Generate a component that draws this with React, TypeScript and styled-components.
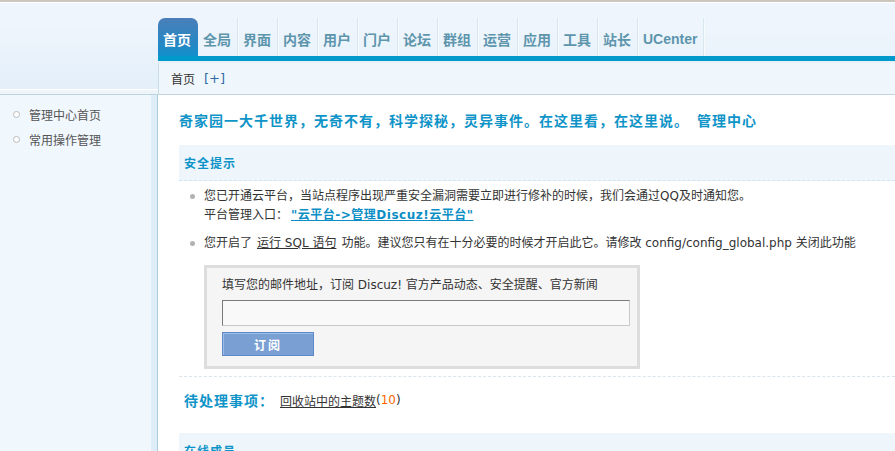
import React from "react";
import styled, { createGlobalStyle } from "styled-components";

const GlobalStyle = createGlobalStyle`
  html, body {
    margin: 0;
    padding: 0;
    background: #fff;
    overflow: hidden;
  }
  body {
    font-family: "DejaVu Sans", "Noto Sans CJK SC", sans-serif;
    font-size: 12px;
    color: #333;
  }
`;

const Page = styled.div`
  width: 895px;
  height: 451px;
  display: grid;
  grid-template-columns: 158px 1fr;
  grid-template-rows: 93px 1fr;
  border-top: 2px solid #cbc7bf;
  box-sizing: border-box;
  overflow: hidden;
`;

const LogoArea = styled.div`
  background: linear-gradient(#eef5fc 0%, #eef5fc 25%, #e2eef9 100%);
  border-top: 1px solid #fff;
  border-bottom: 1px solid #bdd3de;
  box-shadow: inset 0 -4px 0 #eef5fa, inset 0 -5px 0 #fff;
`;

const HeaderRight = styled.div`
  display: flex;
  flex-direction: column;
  background: linear-gradient(#eef5fc 0%, #eef5fc 30%, #e2eef9 100%);
  border-top: 1px solid #fff;
  min-width: 0;
`;

const TabRow = styled.div`
  display: flex;
  align-items: flex-end;
  height: 53px;
  padding-top: 15px;
  box-sizing: border-box;
`;

const Tab = styled.a<{ $active?: boolean }>`
  display: flex;
  align-items: center;
  height: 38px;
  padding: 3px 6px 0 5px;
  box-sizing: border-box;
  font-family: "Liberation Sans", "Noto Sans CJK SC", sans-serif;
  font-size: 14px;
  font-weight: bold;
  white-space: nowrap;
  color: ${(p) => (p.$active ? "#fff" : "#5d95ad")};
  background: ${(p) =>
    p.$active ? "linear-gradient(#4a7fb9, #2a86c2 60%, #1190cc)" : "transparent"};
  border-radius: ${(p) => (p.$active ? "7px 7px 0 0" : "0")};
  border-right: 1px solid ${(p) => (p.$active ? "transparent" : "#d7e6ef")};
  box-shadow: ${(p) => (p.$active ? "none" : "1px 0 0 #f6fafd")};
`;

const BlueBar = styled.div`
  height: 5px;
  background: #0099cc;
`;

const SubNav = styled.div`
  flex: 1;
  display: flex;
  align-items: center;
  gap: 9px;
  padding: 0 0 0 12px;
  margin-top: 2px;
  background: #f0f7fc;
  border-left: 1px solid #c8dce6;
  border-bottom: 1px solid #c2d4dd;
  color: #333;
`;

const Plus = styled.span`
  color: #2d6aa6;
  font-size: 13px;
`;

const Sidebar = styled.div`
  background: #f0f7fd;
  border-right: 1px solid #a9ccdd;
  box-shadow: inset -6px 0 0 #deedf8;
  padding-top: 7px;
`;

const MenuItem = styled.div`
  display: flex;
  align-items: center;
  height: 25px;
  padding-left: 13px;
  gap: 9px;
  color: #555;
`;

const Circle = styled.span`
  width: 5px;
  height: 5px;
  border: 1px solid #b9b9b9;
  border-radius: 50%;
  background: #fff;
`;

const Main = styled.div`
  padding: 17px 0 0 21px;
  min-width: 0;
`;

const Title = styled.h1`
  margin: 0;
  font-size: 14px;
  line-height: 18px;
  font-weight: bold;
  letter-spacing: 1px;
  color: #0f94c8;
  white-space: nowrap;
`;

const TitleExtra = styled.span`
  margin-left: 8px;
`;

const SectionHead = styled.div<{ $gap?: number }>`
  margin-top: ${(p) => p.$gap ?? 15}px;
  height: 35px;
  display: flex;
  align-items: center;
  padding-left: 5px;
  background: #eef6fc;
  border-bottom: 1px dashed #cde5f4;
  font-weight: bold;
  letter-spacing: 1px;
  color: #0f94c8;
`;

const Notices = styled.ul`
  margin: 0;
  padding: 6px 0 7px 25px;
  list-style: none;
  border-bottom: 1px dashed #dbe5ec;
`;

const Notice = styled.li`
  position: relative;
  line-height: 19px;
  white-space: nowrap;
  & + & {
    margin-top: 9px;
  }
  &::before {
    content: "";
    position: absolute;
    left: -14px;
    top: 7px;
    width: 5px;
    height: 5px;
    border-radius: 50%;
    background: #b2b2b2;
  }
`;

const CloudLink = styled.a`
  margin-left: 3px;
  font-weight: bold;
  letter-spacing: 0.5px;
  color: #0b8ec6;
  text-decoration: underline;
`;

const PlainLink = styled.a<{ $spaced?: boolean }>`
  color: #333;
  text-decoration: underline;
  margin: ${(p) => (p.$spaced ? "0 5px" : "0")};
`;

const SubscribeBox = styled.div`
  margin-top: 12px;
  width: 436px;
  box-sizing: border-box;
  border: 3px solid #dddddd;
  background: #f5f5f5;
  padding: 10px 7px 10px 15px;
`;

const BoxText = styled.div`
  line-height: 14px;
`;

const EmailInput = styled.input`
  display: block;
  margin-top: 8px;
  width: 408px;
  height: 26px;
  box-sizing: border-box;
  background: #f9f9f9;
  border: 1px solid;
  border-color: #7a7a7a #c9c9c9 #c9c9c9 #7a7a7a;
`;

const SubmitButton = styled.button`
  display: block;
  margin-top: 6px;
  width: 92px;
  height: 24px;
  background: #7aa0d3;
  border: 1px solid #5c89c9;
  box-shadow: inset 1px 1px 0 #9dbde6;
  color: #fff;
  font-family: inherit;
  font-size: 12px;
  font-weight: bold;
  letter-spacing: 2px;
`;

const Pending = styled.div`
  display: flex;
  align-items: center;
  height: 46px;
  padding-left: 5px;
`;

const PendingLabel = styled.span`
  font-size: 14px;
  font-weight: bold;
  letter-spacing: 1px;
  color: #0f94c8;
  width: 96px;
`;

const Count = styled.span`
  color: #ff6600;
`;

const tabs = ["首页", "全局", "界面", "内容", "用户", "门户", "论坛", "群组", "运营", "应用", "工具", "站长", "UCenter"];

export default function App() {
  return (
    <>
      <GlobalStyle />
      <Page>
        <LogoArea />
        <HeaderRight>
          <TabRow>
            {tabs.map((t, i) => (
              <Tab key={t} $active={i === 0}>
                {t}
              </Tab>
            ))}
          </TabRow>
          <BlueBar />
          <SubNav>
            <span>首页</span>
            <Plus>[+]</Plus>
          </SubNav>
        </HeaderRight>

        <Sidebar>
          <MenuItem>
            <Circle />
            管理中心首页
          </MenuItem>
          <MenuItem>
            <Circle />
            常用操作管理
          </MenuItem>
        </Sidebar>

        <Main>
          <Title>
            奇家园一大千世界，无奇不有，科学探秘，灵异事件。在这里看，在这里说。
            <TitleExtra>管理中心</TitleExtra>
          </Title>

          <SectionHead>安全提示</SectionHead>
          <Notices>
            <Notice>
              您已开通云平台，当站点程序出现严重安全漏洞需要立即进行修补的时候，我们会通过QQ及时通知您。
              <br />
              平台管理入口：<CloudLink>"云平台-&gt;管理Discuz!云平台"</CloudLink>
            </Notice>
            <Notice>
              您开启了<PlainLink $spaced>运行 SQL 语句</PlainLink>功能。建议您只有在十分必要的时候才开启此它。请修改 config/config_global.php 关闭此功能
              <SubscribeBox>
                <BoxText>填写您的邮件地址，订阅 Discuz! 官方产品动态、安全提醒、官方新闻</BoxText>
                <EmailInput type="text" />
                <SubmitButton>订阅</SubmitButton>
              </SubscribeBox>
            </Notice>
          </Notices>

          <Pending>
            <PendingLabel>待处理事项：</PendingLabel>
            <PlainLink>回收站中的主题数</PlainLink>(<Count>10</Count>)
          </Pending>

          <SectionHead $gap={10}>在线成员</SectionHead>
        </Main>
      </Page>
    </>
  );
}
